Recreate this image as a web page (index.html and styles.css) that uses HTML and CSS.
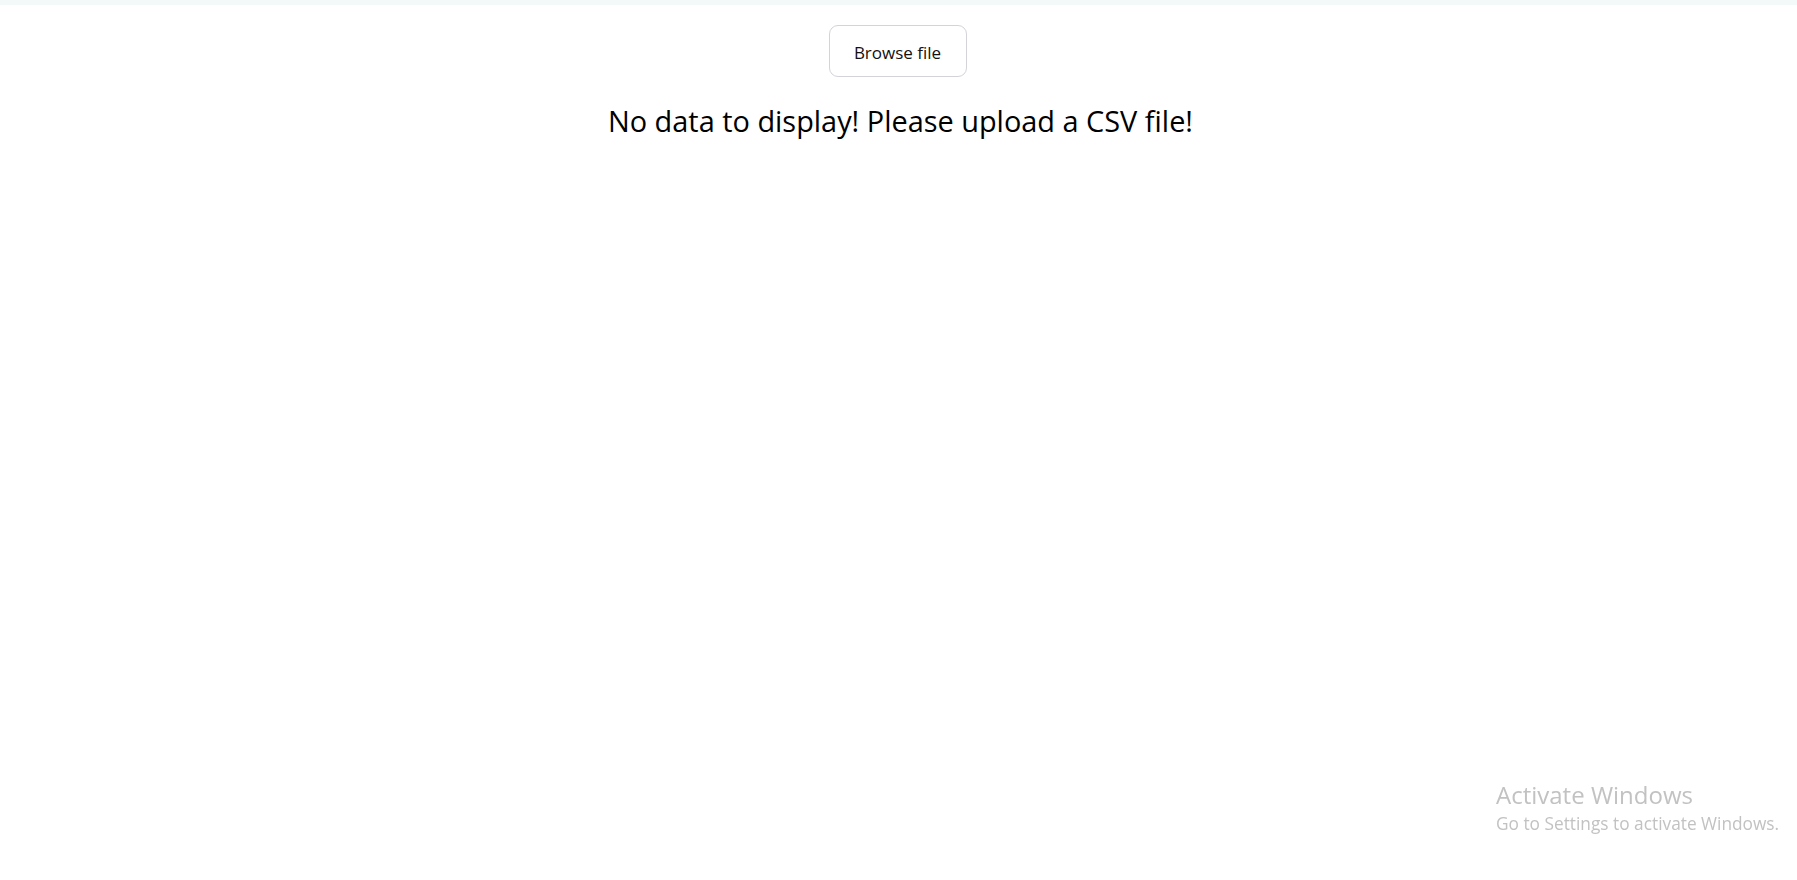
FILE: index.html
```html
<!DOCTYPE html>
<html>
<head>
<meta charset="utf-8">
<link rel="stylesheet" href="styles.css">
</head>
<body>
<div class="topbar"></div>
<main class="main">
  <button class="browse">Browse file</button>
  <h2 class="empty">No data to display! Please upload a CSV file!</h2>
</main>
<div class="activate">
  <div class="act-title">Activate Windows</div>
  <div class="act-sub">Go to Settings to activate Windows.</div>
</div>
</body>
</html>
```
FILE: styles.css
```css
html, body {
  margin: 0;
  padding: 0;
  background: #ffffff;
  font-family: "Open Sans", "Noto Sans", sans-serif;
  color: #000;
}
.topbar {
  height: 5px;
  background: #f3f9f9;
}
.main {
  display: flex;
  flex-direction: column;
  align-items: center;
  padding-top: 20px;
}
.browse {
  width: 138px;
  height: 52px;
  margin-left: -2px;
  border: 1px solid #d3d3da;
  border-radius: 9px;
  background: #fff;
  font-family: "Open Sans", "Noto Sans", sans-serif;
  font-size: 17px;
  color: #111;
  padding: 2px 0 0;
  cursor: pointer;
}
.empty {
  margin: 24px 0 0 4px;
  font-weight: 400;
  font-size: 28.9px;
  line-height: 40px;
}
.activate {
  position: fixed;
  left: 1496px;
  top: 779px;
  color: #c2c2c2;
  font-family: "Open Sans", "Noto Sans", sans-serif;
}
.act-title {
  font-size: 24px;
  line-height: 31px;
}
.act-sub {
  font-size: 17.3px;
  line-height: 24px;
  margin-top: 2px;
}
```
